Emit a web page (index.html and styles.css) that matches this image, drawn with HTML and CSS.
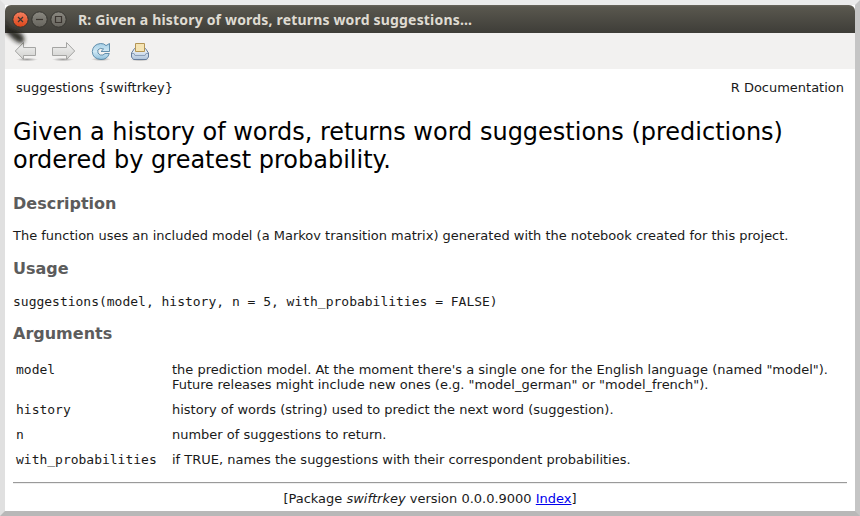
FILE: index.html
```html
<!DOCTYPE html>
<html lang="en">
<head>
<meta charset="utf-8">
<title>R: Given a history of words, returns word suggestions...</title>
<link rel="stylesheet" href="styles.css">
</head>
<body>
<div class="window">
  <header class="titlebar">
    <svg class="controls" width="64" height="28" viewBox="0 0 64 28">
      <defs>
        <linearGradient id="red" x1="0" y1="0" x2="0" y2="1"><stop offset="0" stop-color="#f58060"/><stop offset="1" stop-color="#dc4519"/></linearGradient>
        <linearGradient id="gray" x1="0" y1="0" x2="0" y2="1"><stop offset="0" stop-color="#8b8981"/><stop offset="1" stop-color="#66645d"/></linearGradient>
      </defs>
      <g stroke="#35342f" stroke-width="1">
        <circle cx="15.5" cy="14.5" r="7.7" fill="url(#red)"/>
        <circle cx="34.5" cy="14.5" r="7.7" fill="url(#gray)"/>
        <circle cx="53.5" cy="14.5" r="7.7" fill="url(#gray)"/>
      </g>
      <g fill="none" stroke="#3b3530" stroke-width="1.2">
        <path d="M13 12l5 5M18 12l-5 5"/>
        <path d="M31 14.5h7"/>
        <path d="M50.5 11.5h6v6h-6z"/>
      </g>
    </svg>
    <span class="title">R: Given a history of words, returns word suggestions...</span>
  </header>
  <nav class="toolbar">
    <svg width="150" height="36" viewBox="5 33 150 36">
      <defs>
        <linearGradient id="arrow" x1="0" y1="0" x2="0" y2="1"><stop offset="0" stop-color="#f4f4f3"/><stop offset="1" stop-color="#cfcfcd"/></linearGradient>
        <linearGradient id="blue" x1="0" y1="0" x2="0" y2="1"><stop offset="0" stop-color="#a5cfe6"/><stop offset=".5" stop-color="#d0e8f4"/><stop offset="1" stop-color="#8fc0dc"/></linearGradient>
        <linearGradient id="case" x1="0" y1="0" x2="0" y2="1"><stop offset="0" stop-color="#f5f8fb"/><stop offset="1" stop-color="#afc4dc"/></linearGradient>
        <radialGradient id="shade"><stop offset="0" stop-color="#000" stop-opacity=".35"/><stop offset="1" stop-color="#000" stop-opacity="0"/></radialGradient>
      </defs>
      <ellipse cx="27" cy="59.5" rx="11" ry="1.8" fill="url(#shade)"/>
      <ellipse cx="63" cy="59.5" rx="11" ry="1.8" fill="url(#shade)"/>
      <g fill="url(#arrow)" stroke="#a5a5a3">
        <path d="M15.3 51L23.5 42.5V47.5H35.5V55.5H23.5V59.5Z"/>
        <path d="M74.7 51L66.5 42.5V47.5H52.5V55.5H66.5V59.5Z"/>
      </g>
      <ellipse cx="101" cy="59.3" rx="10" ry="1.8" fill="url(#shade)"/>
      <path d="M106 45.6L109.5 43.5V51.5H101L103.6 49Q99.8 47.2 97.8 50Q97 53.6 100.2 55Q103.2 55.8 105 53.5H109.3Q107.5 59.5 101 59.5Q92.5 58.8 92.3 51.5Q93 44.3 100.5 43.5Q104 43.3 106 45.6Z" fill="url(#blue)" stroke="#5584a4" stroke-width=".9"/>
      <ellipse cx="140" cy="59.6" rx="10" ry="1.7" fill="url(#shade)"/>
      <path d="M134.5 48.5H145.5L148.5 53V57L146.5 59.5H133.5L131.5 57V53Z" fill="url(#case)" stroke="#667c9b"/>
      <path d="M132 53.5H134L135 55.5H145L146 53.5H148" fill="none" stroke="#8ca0ba"/>
      <path d="M135.5 43.5H144.5V51.5H135.5Z" fill="#f5e4b4" stroke="#b49555"/>
    </svg>
  </nav>
  <svg class="smudge" width="30" height="34" viewBox="5 15 30 34">
    <filter id="soft" x="-1" y="-1" width="3" height="3"><feGaussianBlur stdDeviation="2"/></filter>
    <path d="M4 19L9 28Q16 30 22 34Q26 39 23 43Q18 44 12 38L6 32Z" fill="#1c1b19" opacity=".9" filter="url(#soft)"/>
  </svg>
  <main class="page">
    <div class="meta"><span>suggestions {swiftrkey}</span><span>R Documentation</span></div>
    <h2>Given a history of words, returns word suggestions (predictions) ordered by greatest probability.</h2>
    <h3>Description</h3>
    <p>The function uses an included model (a Markov transition matrix) generated with the notebook created for this project.</p>
    <h3>Usage</h3>
    <pre>suggestions(model, history, n = 5, with_probabilities = FALSE)</pre>
    <h3>Arguments</h3>
    <dl class="args">
      <dt>model</dt><dd>the prediction model. At the moment there's a single one for the English language (named "model").<br>Future releases might include new ones (e.g. "model_german" or "model_french").</dd>
      <dt>history</dt><dd>history of words (string) used to predict the next word (suggestion).</dd>
      <dt>n</dt><dd>number of suggestions to return.</dd>
      <dt>with_probabilities</dt><dd>if TRUE, names the suggestions with their correspondent probabilities.</dd>
    </dl>
    <hr>
    <footer>[Package <em>swiftrkey</em> version 0.0.0.9000 <a href="#">Index</a>]</footer>
  </main>
</div>
</body>
</html>
```
FILE: styles.css
```css
* { box-sizing: border-box; }
body { margin: 0; }
.window {
  position: relative;
  width: 860px;
  height: 516px;
  border: 5px solid;
  border-color: #ebebeb #c5c5c5 #b8b8b8 #e0e0e0;
  background: #fff;
  overflow: hidden;
  font: 12.99px/15px "DejaVu Sans", sans-serif;
  color: #1a1a1a;
}
.titlebar {
  display: flex;
  align-items: center;
  height: 28px;
  border-radius: 6px 6px 0 0;
  background: linear-gradient(#69665c 0, #59574e 2px, #3e3d38 100%);
}
.controls { flex: none; }
.title {
  margin-left: 9px;
  padding-top: 1px;
  font: bold 14px/20px "Noto Sans", sans-serif;
  letter-spacing: 0.18px;
  color: #dfdbd2;
  white-space: nowrap;
}
.toolbar { height: 36px; background: #f2f1f0; }
.toolbar svg { display: block; }
.smudge { position: absolute; left: 0; top: 10px; }
.page { padding: 11px 8px 0; }
.meta { display: flex; justify-content: space-between; padding: 0 3px; }
h2 {
  margin: 23px 0 0;
  font: 23.99px/28px "DejaVu Sans", sans-serif;
  color: #000;
}
h3 {
  margin: 20px 0 0;
  font: bold 16px/19px "DejaVu Sans", sans-serif;
  color: #5c5c5c;
}
p { margin: 15px 0 0; }
pre { margin: 16px 0 0; }
p + h3 { margin-top: 16px; }
pre + h3 { margin-top: 15px; }
pre, dt { font-family: "DejaVu Sans Mono", monospace; }
.args {
  display: grid;
  grid-template-columns: 156px 1fr;
  row-gap: 10px;
  margin: 19px 3px 0;
}
dd { margin: 0; white-space: nowrap; }
hr {
  height: 2px;
  margin: 15px 0 7px;
  border: 0;
  border-top: 1px solid #9a9a9a;
  border-bottom: 1px solid #eee;
}
footer { text-align: center; }
a { color: #0000ee; }
```
